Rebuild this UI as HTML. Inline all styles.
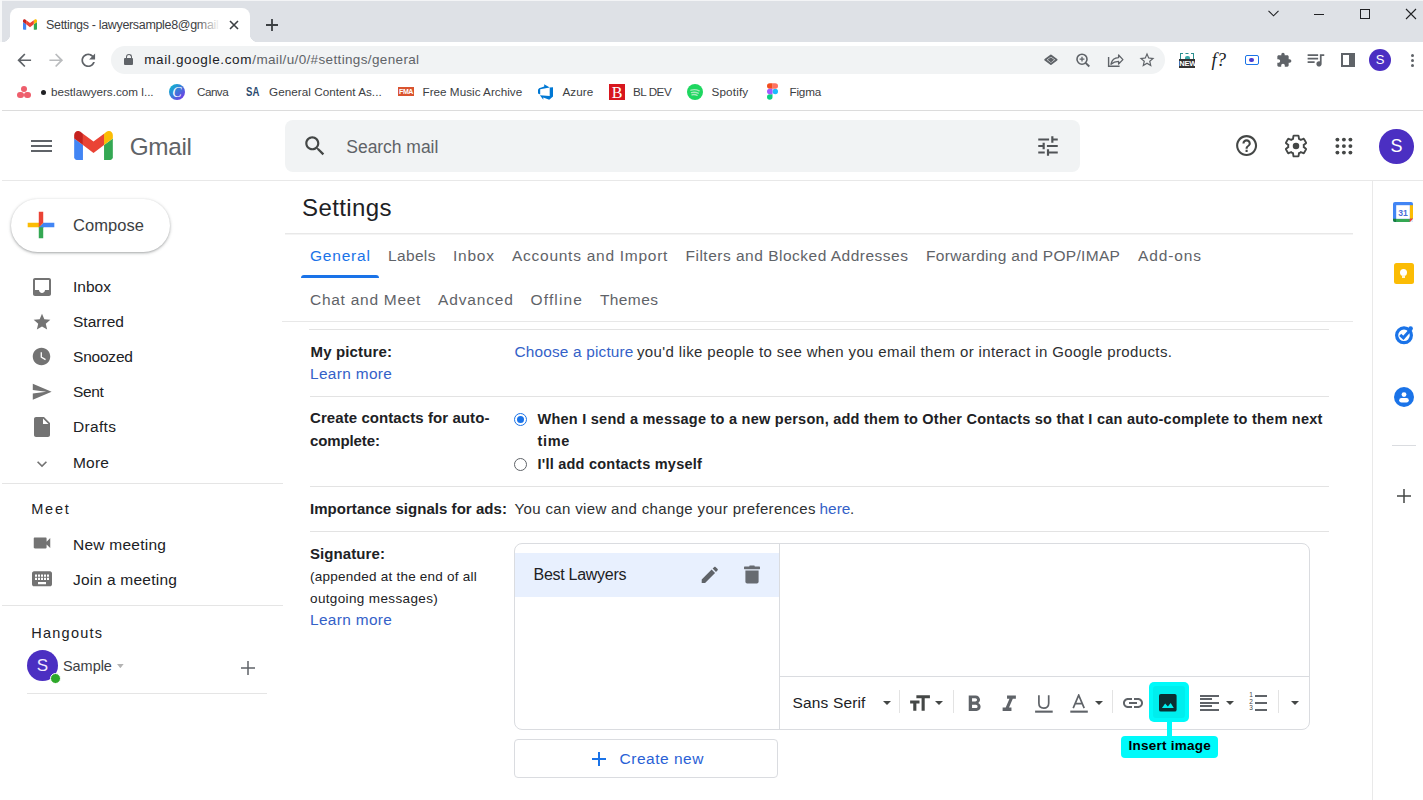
<!DOCTYPE html><html><head><meta charset="utf-8"><style>
html,body{margin:0;padding:0;width:1423px;height:800px;overflow:hidden;background:#fff;position:relative;font-family:"Liberation Sans",sans-serif;}
.t{position:absolute;line-height:0;white-space:nowrap;}
svg{display:block}
</style></head><body>
<div style="position:absolute;left:0px;top:0px;width:1423px;height:42px;background:#dee1e6"></div>
<div style="position:absolute;left:0px;top:0px;width:1423px;height:1px;background:#f3f4f6"></div>
<div style="position:absolute;left:0px;top:0px;width:2px;height:42px;background:#f7f8f9"></div>
<div style="position:absolute;left:10px;top:8px;width:240px;height:34px;background:#fff;border-radius:8px 8px 0 0"></div>
<div style="position:absolute;left:2px;top:34px;width:8px;height:8px;background:radial-gradient(circle at 0 0, #dee1e6 8px, #fff 8.5px)"></div>
<div style="position:absolute;left:250px;top:34px;width:8px;height:8px;background:radial-gradient(circle at 100% 0, #dee1e6 8px, #fff 8.5px)"></div>
<svg style="position:absolute;left:23px;top:19px;" width="14" height="11" viewBox="52 42 88 66"><path fill="#4285f4" d="M58 108h14V74L52 59v43c0 3.32 2.69 6 6 6"/><path fill="#34a853" d="M120 108h14c3.32 0 6-2.69 6-6V59l-20 15"/><path fill="#fbbc04" d="M120 48v26l20-15v-8c0-7.42-8.47-11.65-14.4-7.2"/><path fill="#ea4335" d="M72 74V48l24 18 24-18v26L96 92"/><path fill="#c5221f" d="M52 51v8l20 15V48l-5.6-4.2c-5.94-4.45-14.4-.22-14.4 7.2"/></svg>
<div style="position:absolute;left:196px;top:12px;width:24px;height:26px;background:linear-gradient(to right, rgba(255,255,255,0), #fff);z-index:5"></div>
<svg style="position:absolute;left:229px;top:20px;" width="10" height="10" viewBox="0 0 10 10"><path d="M1 1L9 9M9 1L1 9" stroke="#3c4043" stroke-width="1.6"/></svg>
<svg style="position:absolute;left:266px;top:19px;" width="12" height="12" viewBox="0 0 12 12"><path d="M6 0V12M0 6H12" stroke="#3c4043" stroke-width="1.8"/></svg>
<svg style="position:absolute;left:1268px;top:10px;" width="11" height="7" viewBox="0 0 11 7"><path d="M0.5 0.8L5.5 5.8L10.5 0.8" stroke="#202124" stroke-width="1.1" fill="none"/></svg>
<div style="position:absolute;left:1314px;top:14px;width:10px;height:1px;background:#202124"></div>
<div style="position:absolute;left:1360px;top:9px;width:8px;height:8px;border:1.2px solid #202124"></div>
<svg style="position:absolute;left:1405px;top:8px;" width="12" height="12" viewBox="0 0 12 12"><path d="M1 1L11 11M11 1L1 11" stroke="#202124" stroke-width="1.1"/></svg>
<div style="position:absolute;left:0px;top:42px;width:1423px;height:34px;background:#fff"></div>
<svg style="position:absolute;left:13.9px;top:49.6px;" width="20.5" height="20.5" viewBox="0 0 24 24"><path fill="#5f6368" d="M20 11H7.83l5.59-5.59L12 4l-8 8 8 8 1.41-1.41L7.83 13H20v-2z"/></svg>
<svg style="position:absolute;left:45.9px;top:49.6px;" width="20.5" height="20.5" viewBox="0 0 24 24"><path fill="#babcbe" d="M12 4l-1.41 1.41L16.17 11H4v2h12.17l-5.58 5.59L12 20l8-8z"/></svg>
<svg style="position:absolute;left:77.8px;top:49.6px;" width="20.5" height="20.5" viewBox="0 0 24 24"><path fill="#5f6368" d="M17.65 6.35C16.2 4.9 14.21 4 12 4c-4.42 0-7.99 3.58-7.99 8s3.57 8 7.99 8c3.73 0 6.84-2.55 7.73-6h-2.08c-.82 2.33-3.04 4-5.65 4-3.31 0-6-2.69-6-6s2.69-6 6-6c1.66 0 3.14.69 4.22 1.78L13 11h7V4l-2.35 2.35z"/></svg>
<div style="position:absolute;left:111px;top:46px;width:1054px;height:28px;background:#f1f3f4;border-radius:14px"></div>
<div style="position:absolute;left:124px;top:58px;width:9px;height:7px;background:#5f6368;border-radius:1px"></div>
<div style="position:absolute;left:125.5px;top:53.5px;width:4px;height:6px;border:1.3px solid #5f6368;border-bottom:none;border-radius:3px 3px 0 0"></div>
<svg style="position:absolute;left:1038px;top:48px" width="60" height="24" viewBox="1038 48 60 24"><path d="M1050.9 55.5L1056.6 59.8L1050.9 64.1L1045.2 59.8Z" fill="none" stroke="#5f6368" stroke-width="1.9" stroke-linejoin="round"/><path d="M1050.9 57.2L1054.2 59.8L1050.9 62.4L1047.6 59.8Z" fill="#5f6368"/><circle cx="1082" cy="59.2" r="5" fill="none" stroke="#5f6368" stroke-width="1.6"/><path d="M1085.6 62.8L1089.3 66.5" stroke="#5f6368" stroke-width="1.9"/><path d="M1079.6 59.2H1084.4M1082 56.8V61.6" stroke="#5f6368" stroke-width="1.3"/></svg>
<svg style="position:absolute;left:1100px;top:48px" width="30" height="24" viewBox="1100 48 30 24"><path d="M1108.6 57V66.2H1119.6" fill="none" stroke="#5f6368" stroke-width="1.4"/><path d="M1111 64.2C1111.8 60 1114.6 57.6 1118.6 57.6V55L1122.9 59.6L1118.6 64V61.4C1115.4 61.4 1113 62.4 1111 64.2Z" fill="none" stroke="#5f6368" stroke-width="1.3" stroke-linejoin="round"/></svg>
<svg style="position:absolute;left:1138px;top:51px;" width="18" height="18" viewBox="0 0 24 24"><path fill="#5f6368" d="M22 9.24l-7.19-.62L12 2 9.19 8.63 2 9.24l5.46 4.73L5.82 21 12 17.27 18.18 21l-1.63-7.03L22 9.24zM12 15.4l-3.76 2.27 1-4.28-3.32-2.88 4.38-.38L12 6.1l1.71 4.04 4.38.38-3.32 2.88 1 4.28L12 15.4z"/></svg>
<div style="position:absolute;left:1180px;top:53px;width:14px;height:6px;border:1.3px dashed #2a8f8f;border-bottom:none;box-sizing:border-box"></div>
<div style="position:absolute;left:1184.5px;top:56px;width:5px;height:3px;background:#3aa6a6;border-radius:2px 2px 0 0"></div>
<div style="position:absolute;left:1179.2px;top:59.2px;width:15.5px;height:8.4px;background:#333;color:#fff;font:bold 7.6px/10px 'Liberation Sans',sans-serif;text-align:center;letter-spacing:-0.2px;overflow:hidden">NEW</div>
<div style="position:absolute;left:1211.5px;top:50px;font:italic 18.5px/20px 'Liberation Serif',serif;color:#202124;white-space:nowrap">f?</div>
<div style="position:absolute;left:1245px;top:55px;width:14px;height:9.6px;border:1.5px solid #1a73e8;border-radius:2px;box-sizing:border-box"></div>
<div style="position:absolute;left:1249.3px;top:57.6px;width:4.6px;height:4.6px;border-radius:50%;background:#4b3fd1"></div>
<svg style="position:absolute;left:1276px;top:52px;" width="16" height="16" viewBox="0 0 24 24"><path fill="#5f6368" d="M20.5 11H19V7c0-1.1-.9-2-2-2h-4V3.5C13 2.12 11.88 1 10.5 1S8 2.12 8 3.5V5H4c-1.1 0-1.99.9-1.99 2v3.8H3.5c1.49 0 2.7 1.21 2.7 2.7s-1.21 2.7-2.7 2.7H2V20c0 1.1.9 2 2 2h3.8v-1.5c0-1.49 1.21-2.7 2.7-2.7 1.49 0 2.7 1.21 2.7 2.7V22H17c1.1 0 2-.9 2-2v-4h1.5c1.38 0 2.5-1.12 2.5-2.5S21.88 11 20.5 11z"/></svg>
<svg style="position:absolute;left:1305.4px;top:48.5px;" width="21" height="21" viewBox="0 0 24 24"><path fill="#5f6368" d="M15 6H3v2h12V6zm0 4H3v2h12v-2zM3 16h8v-2H3v2zM17 6v8.18c-.31-.11-.65-.18-1-.18-1.66 0-3 1.34-3 3s1.34 3 3 3 3-1.34 3-3V8h3V6h-5z"/></svg>
<div style="position:absolute;left:1341px;top:53px;width:14px;height:14px;border:2px solid #5f6368;box-sizing:border-box;border-right-width:6px"></div>
<div style="position:absolute;left:1369px;top:49px;width:22px;height:22px;border-radius:50%;background:#4b2fc2;color:#fff;font:13px/22px 'Liberation Sans',sans-serif;text-align:center">S</div>
<div style="position:absolute;left:1410.5px;top:53.5px;width:3.2px;height:3.2px;background:#5f6368;border-radius:50%"></div>
<div style="position:absolute;left:1410.5px;top:58.5px;width:3.2px;height:3.2px;background:#5f6368;border-radius:50%"></div>
<div style="position:absolute;left:1410.5px;top:63.5px;width:3.2px;height:3.2px;background:#5f6368;border-radius:50%"></div>
<div style="position:absolute;left:20.8px;top:85.8px;width:6.4px;height:6.4px;background:#ee5e6c;border-radius:50%"></div>
<div style="position:absolute;left:17.3px;top:91.8px;width:6.4px;height:6.4px;background:#ee5e6c;border-radius:50%"></div>
<div style="position:absolute;left:24.3px;top:91.8px;width:6.4px;height:6.4px;background:#ee5e6c;border-radius:50%"></div>
<div style="position:absolute;left:41px;top:90px;width:5px;height:5px;background:#202124;border-radius:50%"></div>
<div style="position:absolute;left:169px;top:84px;width:16px;height:16px;border-radius:50%;background:linear-gradient(135deg,#00c4cc,#7d2ae8);color:#fff;font:italic 14px/17px 'Liberation Serif',serif;text-align:center">C</div>
<div style="position:absolute;left:398px;top:87px;width:16px;height:9px;background:#d9542f;color:#fff;font:bold 7px/9px 'Liberation Sans',sans-serif;text-align:center;letter-spacing:-0.4px">FMA</div>
<svg style="position:absolute;left:538px;top:84px;" width="16" height="16" viewBox="0 0 16 16"><path fill="#0078d4" d="M15 3.2v9.4l-3.8 3.1-5.9-2.1v2.1L1.9 11.3l9.8.8V3.6L15 3.2zM11.7 3.6L6.2.3v2.2L1.1 4.2 0 5.8v3.6l2.2 1V5.3l9.5-1.7z"/></svg>
<div style="position:absolute;left:609px;top:84px;width:16px;height:16px;background:#d8161e;color:#fff;font:16px/17px 'Liberation Serif',serif;text-align:center">B</div>
<div style="position:absolute;left:687px;top:84px;width:16px;height:16px;border-radius:50%;background:#1ed760"></div>
<svg style="position:absolute;left:687px;top:84px;" width="16" height="16" viewBox="0 0 16 16"><path d="M4 6.2C6.8 5.3 9.6 5.6 12.2 6.8M4.5 8.6C6.8 7.9 9 8.2 11.2 9.2M5 10.8C6.8 10.3 8.5 10.5 10.2 11.3" stroke="#a8e8bc" stroke-width="1.4" fill="none" stroke-linecap="round"/></svg>
<svg style="position:absolute;left:767px;top:83px;" width="11" height="17" viewBox="0 0 38 57"><path fill="#1abcfe" d="M19 28.5a9.5 9.5 0 1 1 19 0 9.5 9.5 0 0 1-19 0z"/><path fill="#0acf83" d="M0 47.5A9.5 9.5 0 0 1 9.5 38H19v9.5a9.5 9.5 0 1 1-19 0z"/><path fill="#ff7262" d="M19 0v19h9.5a9.5 9.5 0 1 0 0-19H19z"/><path fill="#f24e1e" d="M0 9.5A9.5 9.5 0 0 0 9.5 19H19V0H9.5A9.5 9.5 0 0 0 0 9.5z"/><path fill="#a259ff" d="M0 28.5A9.5 9.5 0 0 0 9.5 38H19V19H9.5A9.5 9.5 0 0 0 0 28.5z"/></svg>
<div style="position:absolute;left:2px;top:110px;width:1421px;height:1px;background:#dcdcdc"></div>
<div style="position:absolute;left:2px;top:180px;width:1421px;height:1px;background:#e8e8e8"></div>
<div style="position:absolute;left:31px;top:139.5px;width:21px;height:2px;background:#5f6368"></div>
<div style="position:absolute;left:31px;top:145px;width:21px;height:2px;background:#5f6368"></div>
<div style="position:absolute;left:31px;top:150.4px;width:21px;height:2px;background:#5f6368"></div>
<svg style="position:absolute;left:74px;top:131px;" width="39" height="29" viewBox="52 42 88 66"><path fill="#4285f4" d="M58 108h14V74L52 59v43c0 3.32 2.69 6 6 6"/><path fill="#34a853" d="M120 108h14c3.32 0 6-2.69 6-6V59l-20 15"/><path fill="#fbbc04" d="M120 48v26l20-15v-8c0-7.42-8.47-11.65-14.4-7.2"/><path fill="#ea4335" d="M72 74V48l24 18 24-18v26L96 92"/><path fill="#c5221f" d="M52 51v8l20 15V48l-5.6-4.2c-5.94-4.45-14.4-.22-14.4 7.2"/></svg>
<div style="position:absolute;left:285px;top:120px;width:795px;height:52px;background:#f1f3f4;border-radius:8px"></div>
<svg style="position:absolute;left:302px;top:133px;" width="26" height="26" viewBox="0 0 24 24"><path fill="#444746" d="M15.5 14h-.79l-.28-.27C15.41 12.59 16 11.11 16 9.5 16 5.91 13.09 3 9.5 3S3 5.91 3 9.5 5.91 16 9.5 16c1.61 0 3.09-.59 4.23-1.57l.27.28v.79l5 4.99L20.49 19l-4.99-5zm-6 0C7.01 14 5 11.99 5 9.5S7.01 5 9.5 5 14 7.01 14 9.5 11.99 14 9.5 14z"/></svg>
<svg style="position:absolute;left:1035px;top:133px;" width="26" height="26" viewBox="0 0 24 24"><path fill="#505356" d="M3 17v2h6v-2H3zM3 5v2h10V5H3zm10 16v-2h8v-2h-8v-2h-2v6h2zM7 9v2H3v2h4v2h2V9H7zm14 4v-2H11v2h10zm-6-4h2V7h4V5h-4V3h-2v6z"/></svg>
<svg style="position:absolute;left:1234.3px;top:133.4px;" width="25.2" height="25.2" viewBox="0 0 24 24"><path fill="#444746" d="M11 18h2v-2h-2v2zm1-16C6.48 2 2 6.48 2 12s4.48 10 10 10 10-4.48 10-10S17.52 2 12 2zm0 18c-4.41 0-8-3.59-8-8s3.59-8 8-8 8 3.59 8 8-3.59 8-8 8zm0-14c-2.21 0-4 1.79-4 4h2c0-1.1.9-2 2-2s2 .9 2 2c0 2-3 1.75-3 5h2c0-2.25 3-2.5 3-5 0-2.21-1.79-4-4-4z"/></svg>
<svg style="position:absolute;left:1282.5px;top:132.8px;" width="26" height="26" viewBox="0 0 24 24"><path fill="none" stroke="#444746" stroke-width="1.75" d="M19.14 12.94c.04-.3.06-.61.06-.94 0-.32-.02-.64-.07-.94l2.03-1.58c.18-.14.23-.41.12-.61l-1.92-3.32c-.12-.22-.37-.29-.59-.22l-2.39.96c-.5-.38-1.03-.7-1.62-.94l-.36-2.54c-.04-.24-.24-.41-.48-.41h-3.84c-.24 0-.43.17-.47.41l-.36 2.54c-.59.24-1.13.57-1.62.94l-2.39-.96c-.22-.08-.47 0-.59.22L2.74 8.87c-.12.21-.08.47.12.61l2.03 1.58c-.05.3-.09.63-.09.94s.02.64.07.94l-2.03 1.58c-.18.14-.23.41-.12.61l1.92 3.32c.12.22.37.29.59.22l2.39-.96c.5.38 1.03.7 1.62.94l.36 2.54c.05.24.24.41.48.41h3.84c.24 0 .44-.17.47-.41l.36-2.54c.59-.24 1.13-.56 1.62-.94l2.39.96c.22.08.47 0 .59-.22l1.92-3.32c.12-.22.07-.47-.12-.61l-2.01-1.58z" /><circle cx="12" cy="12" r="3" fill="#444746"/></svg>
<svg style="position:absolute;left:1333px;top:135px;" width="22" height="22" viewBox="0 0 22 22"><circle cx="4.4" cy="4.6" r="1.95" fill="#444746"/><circle cx="4.4" cy="11.1" r="1.95" fill="#444746"/><circle cx="4.4" cy="17.6" r="1.95" fill="#444746"/><circle cx="10.9" cy="4.6" r="1.95" fill="#444746"/><circle cx="10.9" cy="11.1" r="1.95" fill="#444746"/><circle cx="10.9" cy="17.6" r="1.95" fill="#444746"/><circle cx="17.4" cy="4.6" r="1.95" fill="#444746"/><circle cx="17.4" cy="11.1" r="1.95" fill="#444746"/><circle cx="17.4" cy="17.6" r="1.95" fill="#444746"/></svg>
<div style="position:absolute;left:1379.3px;top:129.2px;width:34.6px;height:34.6px;border-radius:50%;background:#4b2fc2;color:#fff;font:18px/35px 'Liberation Sans',sans-serif;text-align:center">S</div>
<div style="position:absolute;left:11px;top:199px;width:159px;height:53px;border-radius:26.5px;background:#fff;box-shadow:0 1px 2px 0 rgba(60,64,67,.30),0 1px 3px 1px rgba(60,64,67,.15)"></div>
<svg style="position:absolute;left:21.3px;top:205px;" width="40" height="40" viewBox="0 0 36 36"><path fill="#34A853" d="M16 16v14h4V20z"/><path fill="#4285F4" d="M30 16H20l-4 4h14z"/><path fill="#FBBC05" d="M6 16v4h10l4-4z"/><path fill="#EA4335" d="M20 16V6h-4v14z"/></svg>
<svg style="position:absolute;left:30px;top:275px;" width="24" height="24" viewBox="0 0 24 24"><path fill="#737373" d="M19 3H4.99c-1.11 0-1.98.89-1.98 2L3 19c0 1.1.88 2 1.99 2H19c1.1 0 2-.9 2-2V5c0-1.11-.9-2-2-2zm0 12h-4c0 1.66-1.35 3-3 3s-3-1.34-3-3H4.99V5H19v10z"/></svg>
<svg style="position:absolute;left:32px;top:311.5px;" width="20" height="20" viewBox="0 0 24 24"><path fill="#737373" d="M12 17.27L18.18 21l-1.64-7.03L22 9.24l-7.19-.61L12 2 9.19 8.63 2 9.24l5.46 4.73L5.82 21z"/></svg>
<svg style="position:absolute;left:31.4px;top:346.4px;" width="21" height="21" viewBox="0 0 24 24"><path fill="#737373" d="M12 2C6.5 2 2 6.5 2 12s4.5 10 10 10 10-4.5 10-10S17.5 2 12 2zm4.2 14.2L11 13V7h1.5v5.2l4.5 2.7-.8 1.3z"/></svg>
<svg style="position:absolute;left:31.3px;top:381px;" width="21.5" height="21.5" viewBox="0 0 24 24"><path fill="#737373" d="M2.01 21L23 12 2.01 3 2 10l15 2-15 2z"/></svg>
<svg style="position:absolute;left:30px;top:414.5px;" width="24" height="24" viewBox="0 0 24 24"><path fill="#737373" d="M6 2c-1.1 0-1.99.9-1.99 2L4 20c0 1.1.89 2 1.99 2H18c1.1 0 2-.9 2-2V8l-6-6H6zm7 7V3.5L18.5 9H13z"/></svg>
<svg style="position:absolute;left:32px;top:454px;" width="20" height="20" viewBox="0 0 24 24"><path fill="#737373" d="M16.59 8.59L12 13.17 7.41 8.59 6 10l6 6 6-6z"/></svg>
<div style="position:absolute;left:2px;top:483px;width:281px;height:1px;background:#e5e5e5"></div>
<svg style="position:absolute;left:30.5px;top:532px;" width="22" height="22" viewBox="0 0 24 24"><path fill="#737373" d="M17 10.5V7c0-.55-.45-1-1-1H4c-.55 0-1 .45-1 1v10c0 .55.45 1 1 1h12c.55 0 1-.45 1-1v-3.5l4 4v-11l-4 4z"/></svg>
<svg style="position:absolute;left:29.9px;top:565.9px" width="24" height="25.7" viewBox="0 0 24 24" preserveAspectRatio="none"><path fill="#737373" d="M20 5H4c-1.1 0-1.99.9-1.99 2L2 17c0 1.1.9 2 2 2h16c1.1 0 2-.9 2-2V7c0-1.1-.9-2-2-2zm-9 3h2v2h-2V8zm0 3h2v2h-2v-2zM8 8h2v2H8V8zm0 3h2v2H8v-2zm-1 2H5v-2h2v2zm0-3H5V8h2v2zm9 7H8v-2h8v2zm0-4h-2v-2h2v2zm0-3h-2V8h2v2zm3 3h-2v-2h2v2zm0-3h-2V8h2v2z"/></svg>
<div style="position:absolute;left:2px;top:605px;width:281px;height:1px;background:#e5e5e5"></div>
<div style="position:absolute;left:27px;top:650px;width:31px;height:31px;border-radius:50%;background:#4b2fc2;color:#f3eaff;font:17px/31px 'Liberation Sans',sans-serif;text-align:center">S</div>
<div style="position:absolute;left:50.2px;top:672.7px;width:11px;height:11px;border-radius:50%;background:#2ea82a;border:1px solid #fff;box-sizing:border-box"></div>
<svg style="position:absolute;left:117.3px;top:664px;" width="6.7" height="4.2" viewBox="0 0 8 5"><path d="M0 0H8L4 5Z" fill="#b3b3b3"/></svg>
<svg style="position:absolute;left:241px;top:661px;" width="14" height="14" viewBox="0 0 14 14"><path d="M7 0V14M0 7H14" stroke="#5f6368" stroke-width="1.5"/></svg>
<div style="position:absolute;left:27px;top:693px;width:240px;height:1px;background:#e5e5e5"></div>
<div style="position:absolute;left:1372px;top:181px;width:1px;height:619px;background:#e9e9e9"></div>
<svg style="position:absolute;left:1393.3px;top:201.9px" width="20" height="20" viewBox="0 0 20 20"><rect x="0" y="0" width="20" height="20" rx="2" fill="#4285f4"/><rect x="16.8" y="3.2" width="3.2" height="13.6" fill="#fbbc04"/><rect x="3.2" y="16.8" width="13.6" height="3.2" fill="#34a853"/><path d="M0 16.8H3.2V20H2A2 2 0 0 1 0 18Z" fill="#188038"/><path d="M16.8 16.8H20L16.8 20Z" fill="#ea4335"/><path d="M20 16.8V18A2 2 0 0 1 18 20H16.8" fill="#fff"/><path d="M16.8 16.8H20L16.8 20Z" fill="#ea4335"/><rect x="3.2" y="3.2" width="13.6" height="13.6" fill="#fff"/><text x="10" y="13.6" font-family="Liberation Sans" font-size="8.6" font-weight="bold" fill="#4a6fd8" text-anchor="middle">31</text></svg>
<div style="position:absolute;left:1394px;top:263px;width:20px;height:21px;background:#fbbc04;border-radius:2.5px"></div>
<div style="position:absolute;left:1400.3px;top:269px;width:7px;height:7px;border-radius:50%;background:#fff"></div>
<div style="position:absolute;left:1402.3px;top:275px;width:3px;height:3.2px;background:#fff6d8"></div>
<svg style="position:absolute;left:1394px;top:324.5px" width="20" height="20" viewBox="0 0 20 20"><circle cx="10" cy="10.3" r="7.4" fill="none" stroke="#1a73e8" stroke-width="3.2"/><path d="M6.2 9.8L9.4 12.8L16.8 4.6" fill="none" stroke="#1a73e8" stroke-width="3"/><circle cx="16.6" cy="3.6" r="2.3" fill="#1a73e8"/></svg>
<svg style="position:absolute;left:1394.2px;top:386.8px" width="20" height="20" viewBox="0 0 20 20"><circle cx="10" cy="10" r="10" fill="#1a73e8"/><circle cx="10" cy="7.6" r="2.4" fill="#fff"/><rect x="5.2" y="11" width="9.6" height="4.6" rx="2.3" fill="#fff"/></svg>
<div style="position:absolute;left:1392px;top:445px;width:24px;height:1px;background:#dadce0"></div>
<svg style="position:absolute;left:1397px;top:489px;" width="14" height="14" viewBox="0 0 14 14"><path d="M7 0V14M0 7H14" stroke="#444746" stroke-width="1.5"/></svg>
<div style="position:absolute;left:285px;top:233px;width:1068px;height:1px;background:#e8e8e8"></div>
<div style="position:absolute;left:285px;top:234px;width:1068px;height:1px;background:#f4f4f4"></div>
<div style="position:absolute;left:301px;top:275px;width:78px;height:3px;background:#1a73e8;border-radius:3px 3px 0 0"></div>
<div style="position:absolute;left:282px;top:321px;width:1071px;height:1px;background:#e8e8e8"></div>
<div style="position:absolute;left:309px;top:329px;width:1020px;height:1px;background:#e3e3e3"></div>
<div style="position:absolute;left:310px;top:396px;width:1019px;height:1px;background:#e3e3e3"></div>
<div style="position:absolute;left:514px;top:413px;width:13px;height:13px;border-radius:50%;border:1.6px solid #1a73e8;box-sizing:border-box;background:#fff"></div>
<div style="position:absolute;left:516.8px;top:415.8px;width:7.4px;height:7.4px;border-radius:50%;background:#1a73e8"></div>
<div style="position:absolute;left:514px;top:458px;width:13px;height:13px;border-radius:50%;border:1px solid #5f6368;box-sizing:border-box;background:#fff"></div>
<div style="position:absolute;left:310px;top:486px;width:1019px;height:1px;background:#e3e3e3"></div>
<div style="position:absolute;left:310px;top:531px;width:1019px;height:1px;background:#e3e3e3"></div>
<div style="position:absolute;left:514px;top:543px;width:796px;height:187px;border:1px solid #dadce0;border-radius:8px;box-sizing:border-box;overflow:hidden"><div style="position:absolute;left:0;top:9px;width:264px;height:44px;background:#e8f0fe"></div></div>
<div style="position:absolute;left:779px;top:544px;width:1px;height:185px;background:#dadce0"></div>
<div style="position:absolute;left:780px;top:676px;width:529px;height:1px;background:#dadce0"></div>
<svg style="position:absolute;left:697.8px;top:563.2px;" width="24" height="24" viewBox="0 0 24 24"><path fill="#5f6368" d="M3 17.25V21h3.75L17.81 9.94l-3.75-3.75L3 17.25zM20.71 7.04c.39-.39.39-1.02 0-1.41l-2.34-2.34c-.39-.39-1.02-.39-1.41 0l-1.83 1.83 3.75 3.75 1.83-1.83z" transform="translate(1 1) scale(0.9)"/></svg>
<svg style="position:absolute;left:740px;top:560px" width="24" height="28" viewBox="740 560 24 28"><rect x="744" y="566.6" width="16" height="2.6" rx="0.6" fill="#676b71"/><rect x="749.3" y="565.4" width="5.4" height="2" rx="0.6" fill="#676b71"/><path d="M745.4 570.4H758.6V581.8A1.8 1.8 0 0 1 756.8 583.6H747.2A1.8 1.8 0 0 1 745.4 581.8Z" fill="#676b71"/></svg>
<svg style="position:absolute;left:882.5px;top:701px;" width="8" height="4" viewBox="0 0 8 4"><path d="M0 0H8L4 4Z" fill="#444746"/></svg>
<div style="position:absolute;left:899px;top:690px;width:1px;height:23px;background:#e3e3e3"></div>
<svg style="position:absolute;left:906.5px;top:690.5px;" width="25" height="25" viewBox="0 0 24 24"><path fill="#444746" d="M9 4v3h5v12h3V7h5V4H9zm-6 8h3v7h3v-7h3V9H3v3z"/></svg>
<svg style="position:absolute;left:935.3px;top:701px;" width="8" height="4" viewBox="0 0 8 4"><path d="M0 0H8L4 4Z" fill="#444746"/></svg>
<div style="position:absolute;left:953px;top:690px;width:1px;height:23px;background:#e3e3e3"></div>
<svg style="position:absolute;left:960.8px;top:690.6px;" width="26.5" height="26.5" viewBox="0 0 24 24"><path fill="#5f6368" d="M15.6 10.79c.97-.67 1.65-1.77 1.65-2.79 0-2.26-1.75-4-4-4H7v14h7.04c2.09 0 3.71-1.7 3.71-3.79 0-1.52-.86-2.82-2.15-3.42zM10 6.5h3c.83 0 1.5.67 1.5 1.5s-.67 1.5-1.5 1.5h-3v-3zm3.5 9H10v-3h3.5c.83 0 1.5.67 1.5 1.5s-.67 1.5-1.5 1.5z"/></svg>
<svg style="position:absolute;left:996.3px;top:690.6px;" width="26.5" height="26.5" viewBox="0 0 24 24"><path fill="#5f6368" d="M10 4v3h2.21l-3.42 8H6v3h8v-3h-2.21l3.42-8H18V4z"/></svg>
<svg style="position:absolute;left:1034px;top:694px;" width="20" height="20" viewBox="0 0 20 20"><path d="M4.9 1.2V9.3C4.9 12.3 6.9 14.1 9.8 14.1S14.7 12.3 14.7 9.3V1.2" fill="none" stroke="#5f6368" stroke-width="1.7"/><rect x="1.1" y="16.6" width="17.6" height="2.1" fill="#5f6368"/></svg>
<svg style="position:absolute;left:1069px;top:694px;" width="20" height="20" viewBox="0 0 20 20"><path d="M4.2 14.2L9.7 1.2L15.2 14.2M6.3 9.6H13.1" fill="none" stroke="#5f6368" stroke-width="1.7"/><rect x="1.3" y="16.6" width="17.5" height="2.1" fill="#5f6368"/></svg>
<svg style="position:absolute;left:1095px;top:701px;" width="8" height="4" viewBox="0 0 8 4"><path d="M0 0H8L4 4Z" fill="#444746"/></svg>
<div style="position:absolute;left:1112px;top:690px;width:1px;height:23px;background:#e3e3e3"></div>
<svg style="position:absolute;left:1121px;top:691px;" width="24" height="24" viewBox="0 0 24 24"><path fill="#5f6368" d="M3.9 12c0-1.71 1.39-3.1 3.1-3.1h4V7H7c-2.76 0-5 2.24-5 5s2.24 5 5 5h4v-1.9H7c-1.71 0-3.1-1.39-3.1-3.1zM8 13h8v-2H8v2zm9-6h-4v1.9h4c1.71 0 3.1 1.39 3.1 3.1s-1.39 3.1-3.1 3.1h-4V17h4c2.76 0 5-2.24 5-5s-2.24-5-5-5z"/></svg>
<div style="position:absolute;left:1149px;top:682px;width:40px;height:40px;background:#00fafa;border-radius:5px"></div>
<div style="position:absolute;left:1153px;top:686px;width:32px;height:32px;background:#00eeee;border-radius:3px"></div>
<svg style="position:absolute;left:1159px;top:694.2px" width="17.6" height="17.6" viewBox="0 0 19 19"><rect x="0" y="0" width="19" height="19" rx="2" fill="#0b2f33"/><path d="M3.2 15.2L6.6 10.2L9.6 13.6L12.6 9.6L16 15.2Z" fill="#00eeee"/></svg>
<div style="position:absolute;left:1167px;top:721px;width:5px;height:16px;background:#00fafa"></div>
<div style="position:absolute;left:1121px;top:736px;width:97px;height:22px;background:#00fafa;border-radius:4px"></div>
<div style="position:absolute;left:1200px;top:695px;width:18.7px;height:2px;background:#5f6368"></div>
<div style="position:absolute;left:1200px;top:698.4px;width:12px;height:2px;background:#5f6368"></div>
<div style="position:absolute;left:1200px;top:701.8px;width:18.7px;height:2px;background:#5f6368"></div>
<div style="position:absolute;left:1200px;top:705.2px;width:12px;height:2px;background:#5f6368"></div>
<div style="position:absolute;left:1200px;top:708.6px;width:18.7px;height:2px;background:#5f6368"></div>
<svg style="position:absolute;left:1226.3px;top:701px;" width="8" height="4" viewBox="0 0 8 4"><path d="M0 0H8L4 4Z" fill="#444746"/></svg>
<div style="position:absolute;left:1254.9px;top:695px;width:11.8px;height:2px;background:#5f6368"></div>
<div style="position:absolute;left:1254.9px;top:701.9px;width:11.8px;height:2px;background:#5f6368"></div>
<div style="position:absolute;left:1254.9px;top:708.6px;width:11.8px;height:2px;background:#5f6368"></div>
<div style="position:absolute;left:1248.6px;top:692px;font:6.5px/6.6px 'Liberation Sans',sans-serif;color:#444;width:5px;text-align:center">1<br>2<br>3</div>
<div style="position:absolute;left:1278px;top:690px;width:1px;height:23px;background:#e3e3e3"></div>
<svg style="position:absolute;left:1291.2px;top:701px;" width="8" height="4" viewBox="0 0 8 4"><path d="M0 0H8L4 4Z" fill="#444746"/></svg>
<div style="position:absolute;left:514px;top:739px;width:264px;height:39px;border:1px solid #dadce0;border-radius:4px;box-sizing:border-box"></div>
<svg style="position:absolute;left:592px;top:752px;" width="14" height="14" viewBox="0 0 14 14"><path d="M7 0V14M0 7H14" stroke="#1a73e8" stroke-width="2"/></svg>
<div id="t0" class="t" style="left:46px;top:24.67px;font-size:12.5px;color:#3c4043;letter-spacing:-0.326px;">Settings - lawyersample8@gmail</div>
<div id="t1" class="t" style="left:144.2px;top:60.32px;font-size:13.5px;color:#202124;letter-spacing:0.644px;">mail.google.com</div>
<div id="t2" class="t" style="left:252.3px;top:60.32px;font-size:13.5px;color:#5f6368;letter-spacing:0.354px;">/mail/u/0/#settings/general</div>
<div id="t3" class="t" style="left:51px;top:91.95px;font-size:11.7px;color:#3c4043;">bestlawyers.com l...</div>
<div id="t4" class="t" style="left:197px;top:91.95px;font-size:11.7px;color:#3c4043;letter-spacing:-0.524px;">Canva</div>
<div id="t5" class="t" style="left:246px;top:91.84px;font-size:12px;color:#2c4a6e;font-weight:700;transform:scaleX(0.8);transform-origin:0 0">SA</div>
<div id="t6" class="t" style="left:269px;top:91.95px;font-size:11.7px;color:#3c4043;letter-spacing:0.048px;">General Content As...</div>
<div id="t7" class="t" style="left:422.5px;top:91.95px;font-size:11.7px;color:#3c4043;letter-spacing:0.019px;">Free Music Archive</div>
<div id="t8" class="t" style="left:562.5px;top:91.95px;font-size:11.7px;color:#3c4043;letter-spacing:0.039px;">Azure</div>
<div id="t9" class="t" style="left:633px;top:91.95px;font-size:11.7px;color:#3c4043;letter-spacing:-0.488px;">BL DEV</div>
<div id="t10" class="t" style="left:711.5px;top:91.95px;font-size:11.7px;color:#3c4043;letter-spacing:0.161px;">Spotify</div>
<div id="t11" class="t" style="left:789.5px;top:91.95px;font-size:11.7px;color:#3c4043;letter-spacing:-0.196px;">Figma</div>
<div id="t12" class="t" style="left:129.8px;top:146.78px;font-size:24.3px;color:#5f6368;letter-spacing:-0.349px;">Gmail</div>
<div id="t13" class="t" style="left:346.3px;top:146.94px;font-size:17.5px;color:#5f6368;letter-spacing:-0.036px;">Search mail</div>
<div id="t14" class="t" style="left:73px;top:225.28px;font-size:16.5px;color:#3c4043;letter-spacing:0.061px;">Compose</div>
<div id="t15" class="t" style="left:73px;top:286.63px;font-size:15.5px;color:#202124;">Inbox</div>
<div id="t16" class="t" style="left:73px;top:321.63px;font-size:15.5px;color:#202124;letter-spacing:0.014px;">Starred</div>
<div id="t17" class="t" style="left:73px;top:356.63px;font-size:15.5px;color:#202124;letter-spacing:-0.212px;">Snoozed</div>
<div id="t18" class="t" style="left:73px;top:391.63px;font-size:15.5px;color:#202124;letter-spacing:-0.320px;">Sent</div>
<div id="t19" class="t" style="left:73px;top:426.63px;font-size:15.5px;color:#202124;letter-spacing:0.317px;">Drafts</div>
<div id="t20" class="t" style="left:73px;top:463.13px;font-size:15.5px;color:#202124;letter-spacing:0.201px;">More</div>
<div id="t21" class="t" style="left:31.2px;top:509.48px;font-size:14.5px;color:#202124;letter-spacing:1.807px;">Meet</div>
<div id="t22" class="t" style="left:73px;top:544.63px;font-size:15.5px;color:#202124;letter-spacing:0.246px;">New meeting</div>
<div id="t23" class="t" style="left:73px;top:579.63px;font-size:15.5px;color:#202124;letter-spacing:0.240px;">Join a meeting</div>
<div id="t24" class="t" style="left:31.2px;top:633.48px;font-size:14.5px;color:#202124;letter-spacing:1.256px;">Hangouts</div>
<div id="t25" class="t" style="left:63px;top:665.98px;font-size:14.5px;color:#3c4043;letter-spacing:-0.060px;">Sample</div>
<div id="t26" class="t" style="left:302px;top:208.18px;font-size:24px;color:#202124;letter-spacing:0.389px;">Settings</div>
<div id="t27" class="t" style="left:310px;top:255.63px;font-size:15.5px;color:#1a73e8;letter-spacing:0.796px;">General</div>
<div id="t28" class="t" style="left:388px;top:255.63px;font-size:15.5px;color:#5f6368;letter-spacing:0.348px;">Labels</div>
<div id="t29" class="t" style="left:453px;top:255.63px;font-size:15.5px;color:#5f6368;letter-spacing:0.752px;">Inbox</div>
<div id="t30" class="t" style="left:512px;top:255.63px;font-size:15.5px;color:#5f6368;letter-spacing:0.737px;">Accounts and Import</div>
<div id="t31" class="t" style="left:685.5px;top:255.63px;font-size:15.5px;color:#5f6368;letter-spacing:0.498px;">Filters and Blocked Addresses</div>
<div id="t32" class="t" style="left:926px;top:255.63px;font-size:15.5px;color:#5f6368;letter-spacing:0.317px;">Forwarding and POP/IMAP</div>
<div id="t33" class="t" style="left:1138px;top:255.63px;font-size:15.5px;color:#5f6368;letter-spacing:0.866px;">Add-ons</div>
<div id="t34" class="t" style="left:310px;top:300.13px;font-size:15.5px;color:#5f6368;letter-spacing:0.729px;">Chat and Meet</div>
<div id="t35" class="t" style="left:438px;top:300.13px;font-size:15.5px;color:#5f6368;letter-spacing:0.854px;">Advanced</div>
<div id="t36" class="t" style="left:530.5px;top:300.13px;font-size:15.5px;color:#5f6368;letter-spacing:1.150px;">Offline</div>
<div id="t37" class="t" style="left:600px;top:300.13px;font-size:15.5px;color:#5f6368;letter-spacing:0.386px;">Themes</div>
<div id="t38" class="t" style="left:310.5px;top:351.80px;font-size:15px;color:#202124;font-weight:700;letter-spacing:0.138px;">My picture:</div>
<div id="t39" class="t" style="left:310px;top:373.66px;font-size:15.4px;color:#3461c8;letter-spacing:0.356px;">Learn more</div>
<div id="t40" class="t" style="left:514.5px;top:351.66px;font-size:15.4px;color:#3461c8;letter-spacing:0.171px;">Choose a picture</div>
<div id="t41" class="t" style="left:637px;top:351.80px;font-size:15px;color:#2d2f31;letter-spacing:0.368px;">you'd like people to see when you email them or interact in Google products.</div>
<div id="t42" class="t" style="left:310px;top:418.30px;font-size:15px;color:#202124;font-weight:700;letter-spacing:0.077px;">Create contacts for auto-</div>
<div id="t43" class="t" style="left:310px;top:440.80px;font-size:15px;color:#202124;font-weight:700;letter-spacing:-0.120px;">complete:</div>
<div id="t44" class="t" style="left:537.5px;top:419.48px;font-size:14.5px;color:#202124;font-weight:700;letter-spacing:0.247px;">When I send a message to a new person, add them to Other Contacts so that I can auto-complete to them next</div>
<div id="t45" class="t" style="left:537.5px;top:441.48px;font-size:14.5px;color:#202124;font-weight:700;letter-spacing:0.681px;">time</div>
<div id="t46" class="t" style="left:537.5px;top:464.48px;font-size:14.5px;color:#202124;font-weight:700;letter-spacing:0.234px;">I'll add contacts myself</div>
<div id="t47" class="t" style="left:310px;top:508.80px;font-size:15px;color:#202124;font-weight:700;letter-spacing:0.039px;">Importance signals for ads:</div>
<div id="t48" class="t" style="left:514.5px;top:508.80px;font-size:15px;color:#2d2f31;letter-spacing:0.353px;">You can view and change your preferences</div>
<div id="t49" class="t" style="left:819.5px;top:508.66px;font-size:15.4px;color:#3461c8;letter-spacing:0.037px;">here</div>
<div id="t50" class="t" style="left:850px;top:508.80px;font-size:15px;color:#2d2f31;">.</div>
<div id="t51" class="t" style="left:310px;top:554.30px;font-size:15px;color:#202124;font-weight:700;letter-spacing:0.079px;">Signature:</div>
<div id="t52" class="t" style="left:310px;top:576.82px;font-size:13.5px;color:#202124;letter-spacing:0.237px;">(appended at the end of all</div>
<div id="t53" class="t" style="left:310px;top:598.82px;font-size:13.5px;color:#202124;letter-spacing:0.367px;">outgoing messages)</div>
<div id="t54" class="t" style="left:310px;top:619.86px;font-size:15.4px;color:#3461c8;letter-spacing:0.356px;">Learn more</div>
<div id="t55" class="t" style="left:533.5px;top:575.26px;font-size:16px;color:#202124;letter-spacing:-0.281px;">Best Lawyers</div>
<div id="t56" class="t" style="left:792.5px;top:702.93px;font-size:15.5px;color:#202124;letter-spacing:0.157px;">Sans Serif</div>
<div id="t57" class="t" style="left:1128.5px;top:746.32px;font-size:13.5px;color:#000;font-weight:700;letter-spacing:0.253px;">Insert image</div>
<div id="t58" class="t" style="left:619.5px;top:759.13px;font-size:15.5px;color:#2a5fd6;letter-spacing:0.518px;">Create new</div>
</body></html>
